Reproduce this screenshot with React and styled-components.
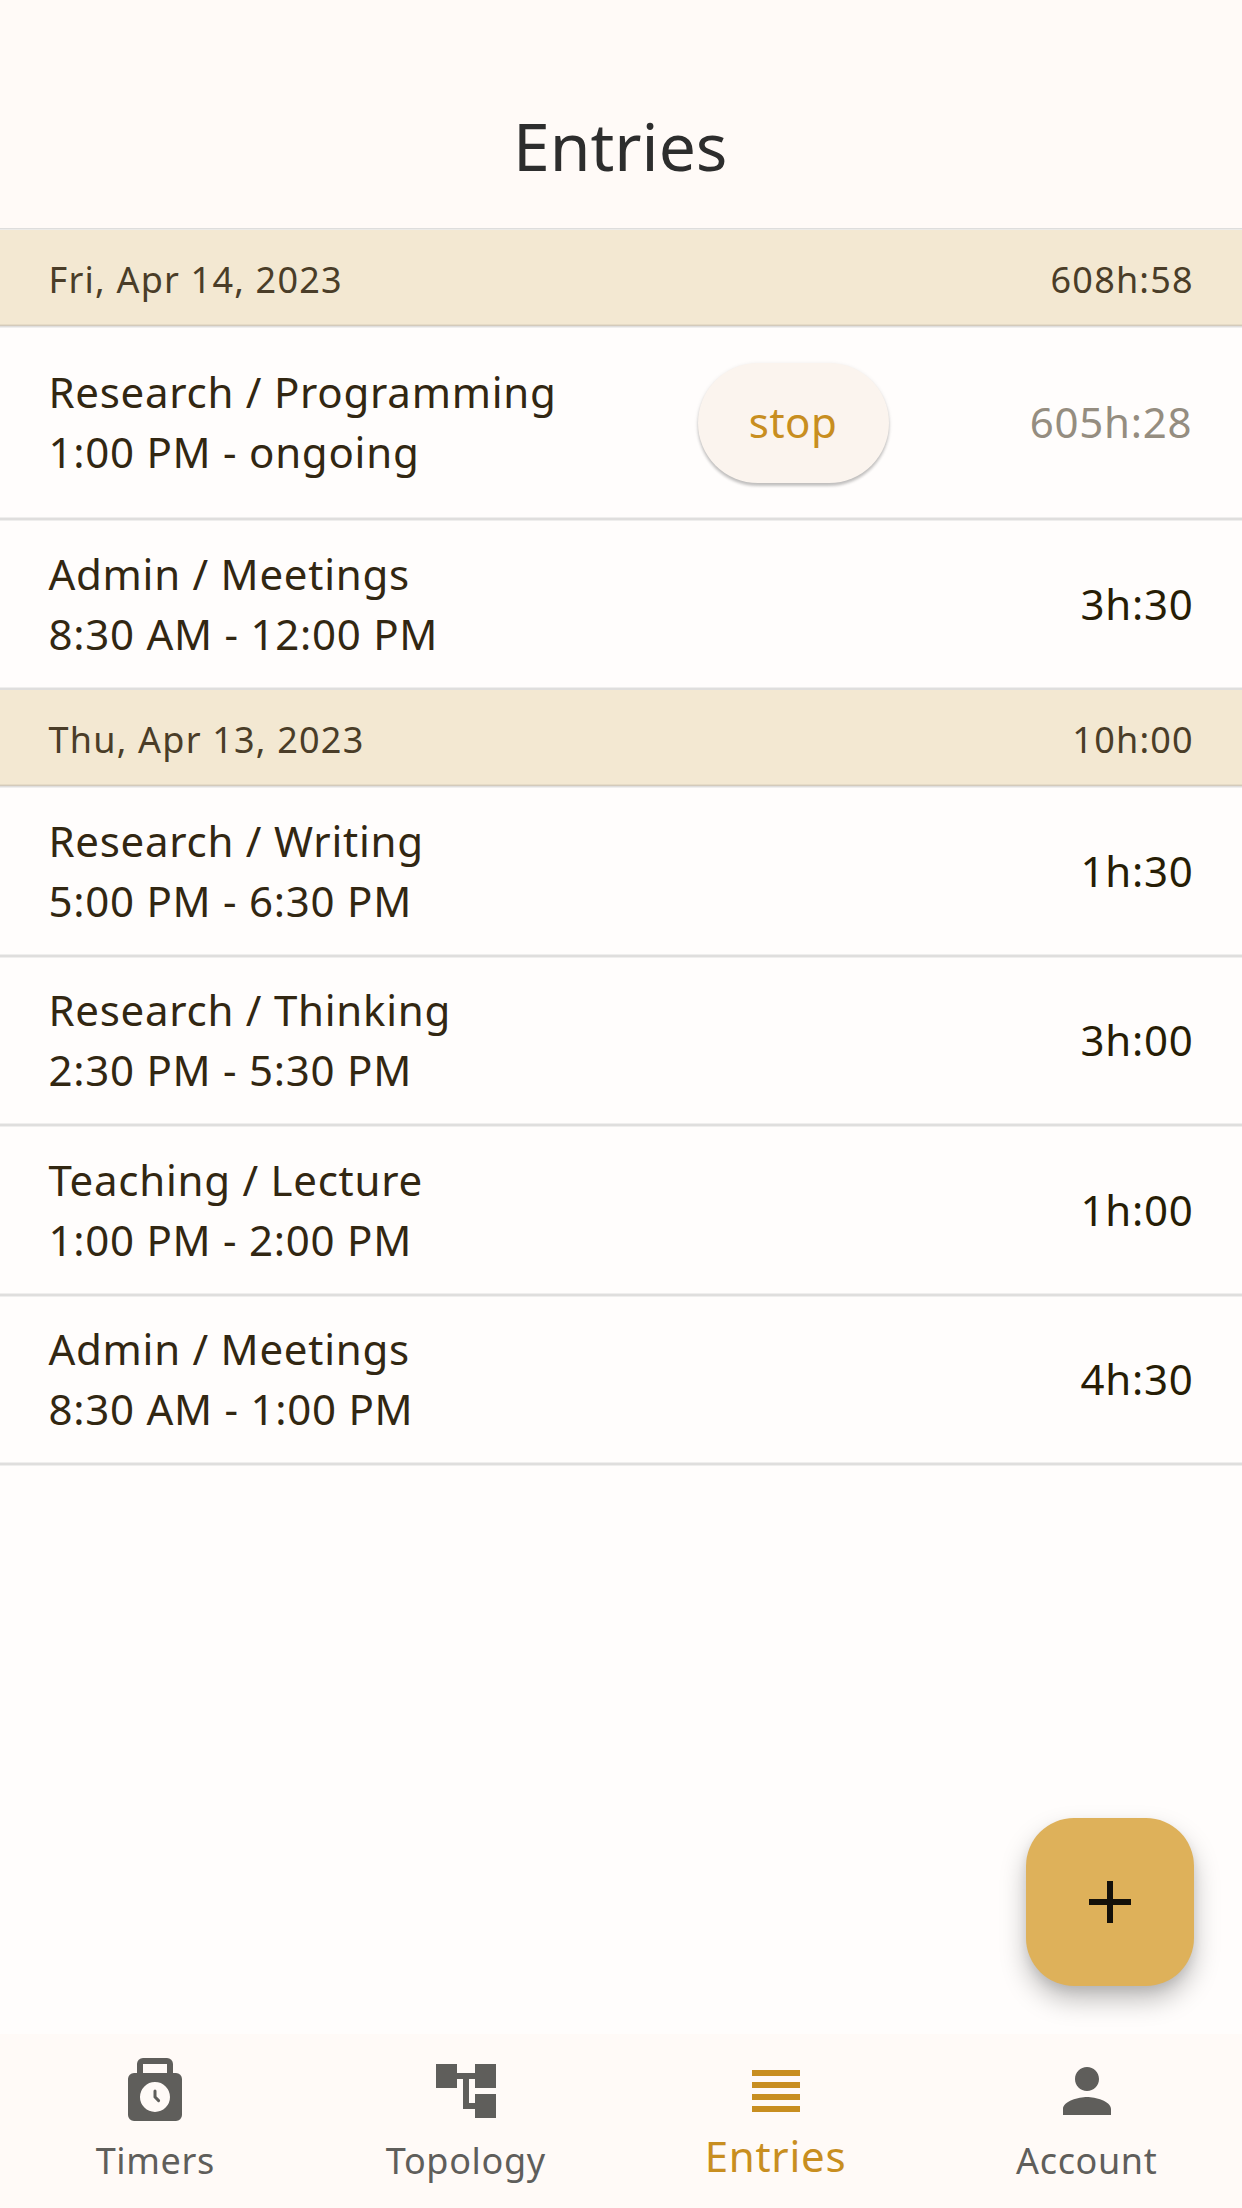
import React from "react";
import styled, { createGlobalStyle, css } from "styled-components";

const GlobalStyle = createGlobalStyle`
  *, *::before, *::after { box-sizing: border-box; }
  body {
    margin: 0;
    background: #fffdfc;
    font-family: "Noto Sans", "Open Sans", sans-serif;
  }
`;

const Screen = styled.div`
  position: relative;
  display: flex;
  flex-direction: column;
  width: 1242px;
  height: 2208px;
  overflow: hidden;
  background: #fffdfc;
  color: #322712;
`;

const AppBar = styled.header`
  display: flex;
  flex: none;
  align-items: center;
  justify-content: center;
  height: 228px;
  padding: 62px 1.5px 0 0;
  background: #fffaf7;
`;

const Title = styled.h1`
  margin: 0;
  font-size: 66px;
  font-weight: 400;
  line-height: 84px;
  color: #2d2d2d;
`;

const EntryList = styled.main`
  flex: 1;
  min-height: 0;
`;

const DayHeader = styled.div`
  display: flex;
  align-items: center;
  justify-content: space-between;
  height: ${(p) => p.$height}px;
  padding: 6px 48.2px 0 48.6px;
  background: #f3e8d2;
  font-size: 36px;
  line-height: 48px;
  letter-spacing: 1.2px;
  color: #4a3d28;
`;

const rules = {
  top: css`
    height: 2px;
    background: linear-gradient(#dedddc 50%, #ecebe9 50%);
  `,
  row: css`
    height: 4px;
    background: linear-gradient(#efeeed 25%, #dfdedd 25% 75%, #efeeed 75%);
  `,
  beforeDay: css`
    height: 3px;
    background: linear-gradient(#efeeed 33.3%, #dfdedd 33.3%);
  `,
  afterDay: css`
    height: 4px;
    background: linear-gradient(#e6dbc6 25%, #d3cabb 25% 50%, #dfdedd 50% 75%, #efeeed 75%);
  `,
};

const Rule = styled.div`
  ${(p) => rules[p.$kind]}
`;

const EntryRow = styled.div`
  display: flex;
  align-items: center;
  height: ${(p) => p.$height}px;
  padding: 0 48.4px ${(p) => p.$inset || 0}px 48.4px;
  font-size: 42px;
  line-height: 60px;
  letter-spacing: 0.75px;
`;

const EntryText = styled.div`
  flex: 1;
`;

const Line = styled.div`
  white-space: nowrap;
`;

const StopButton = styled.button`
  width: 191px;
  height: 120px;
  margin: 2px 1px 0 0;
  padding: 0 0 2px;
  border: 0;
  border-radius: 60px;
  background: #fbf4ee;
  box-shadow: 0 3px 3px rgba(0, 0, 0, 0.2), 0 1px 4px rgba(0, 0, 0, 0.1);
  font-family: inherit;
  font-size: 42px;
  font-weight: 400;
  line-height: 60px;
  letter-spacing: 0.5px;
  color: #c88e20;
`;

const Duration = styled.div`
  width: 304px;
  padding-right: ${(p) => (p.$running ? 1.4 : 0)}px;
  text-align: right;
  color: ${(p) => (p.$running ? "#958d80" : "#271d05")};
`;

const Fab = styled.button`
  position: absolute;
  right: 48px;
  bottom: 222px;
  display: flex;
  align-items: center;
  justify-content: center;
  width: 168px;
  height: 168px;
  padding: 0;
  border: 0;
  border-radius: 48px;
  background: #deb15a;
  box-shadow: 0 14px 26px rgba(0, 0, 0, 0.25), 0 5px 10px rgba(0, 0, 0, 0.08);
  color: #14110a;
`;

const Icon = styled.svg`
  display: block;
  width: 72px;
  height: 72px;
  fill: currentColor;
`;

const NavBar = styled.nav`
  display: grid;
  grid-template-columns: repeat(4, 1fr);
  flex: none;
  height: 174px;
  background: #fffaf7;
`;

const NavItem = styled.a`
  display: flex;
  flex-direction: column;
  align-items: center;
  padding-top: 21px;
  color: ${(p) => (p.$active ? "#c88e20" : "#5f5e5b")};
`;

const NavLabel = styled.span`
  margin-top: ${(p) => (p.$active ? -1 : 10)}px;
  margin-right: ${(p) => (p.$active ? 1.5 : 0)}px;
  font-size: ${(p) => (p.$active ? 42 : 36)}px;
  line-height: ${(p) => (p.$active ? 60 : 48)}px;
  letter-spacing: ${(p) => (p.$active ? 0.75 : 0.64)}px;
`;

const days = [
  {
    date: "Fri, Apr 14, 2023",
    total: "608h:58",
    height: 94,
    entries: [
      { name: "Research / Programming", time: "1:00 PM - ongoing", duration: "605h:28", running: true, height: 189, inset: 1 },
      { name: "Admin / Meetings", time: "8:30 AM - 12:00 PM", duration: "3h:30", height: 166 },
    ],
  },
  {
    date: "Thu, Apr 13, 2023",
    total: "10h:00",
    height: 94,
    entries: [
      { name: "Research / Writing", time: "5:00 PM - 6:30 PM", duration: "1h:30", height: 166 },
      { name: "Research / Thinking", time: "2:30 PM - 5:30 PM", duration: "3h:00", height: 165, inset: 1 },
      { name: "Teaching / Lecture", time: "1:00 PM - 2:00 PM", duration: "1h:00", height: 166 },
      { name: "Admin / Meetings", time: "8:30 AM - 1:00 PM", duration: "4h:30", height: 165, inset: 1 },
    ],
  },
];

const tabs = [
  {
    label: "Timers",
    icon: (
      <>
        <path
          fillRule="evenodd"
          d="M5 6h1V3a2 2 0 0 1 2-2h8a2 2 0 0 1 2 2v3h1a2 2 0 0 1 2 2v12a2 2 0 0 1-2 2H5a2 2 0 0 1-2-2V8a2 2 0 0 1 2-2zM8 3v3h8V3zM12 9a5 5 0 1 0 0 10 5 5 0 0 0 0-10z"
        />
        <path d="M12 12v2l1.2 1.2" fill="none" stroke="currentColor" strokeWidth="1" strokeLinecap="round" />
      </>
    ),
  },
  { label: "Topology", icon: <path d="M22 11V3h-7v3H9V3H2v8h7V8h2v10h4v3h7v-8h-7v3h-2V8h2v3z" /> },
  {
    label: "Entries",
    active: true,
    icon: <path d="M4 15h16v-2H4v2zm0 4h16v-2H4v2zm0-8h16V9H4v2zm0-6v2h16V5H4z" />,
  },
  {
    label: "Account",
    icon: (
      <path d="M12 12c2.21 0 4-1.79 4-4s-1.79-4-4-4-4 1.79-4 4 1.79 4 4 4zm0 2c-2.67 0-8 1.34-8 4v2h16v-2c0-2.66-5.33-4-8-4z" />
    ),
  },
];

function Day({ day, last }) {
  return (
    <section>
      <DayHeader $height={day.height}>
        <span>{day.date}</span>
        <span>{day.total}</span>
      </DayHeader>
      <Rule $kind="afterDay" />
      {day.entries.map((entry, i) => (
        <React.Fragment key={entry.time}>
          <EntryRow $height={entry.height} $inset={entry.inset}>
            <EntryText>
              <Line>{entry.name}</Line>
              <Line>{entry.time}</Line>
            </EntryText>
            {entry.running && <StopButton>stop</StopButton>}
            <Duration $running={entry.running}>{entry.duration}</Duration>
          </EntryRow>
          <Rule $kind={!last && i === day.entries.length - 1 ? "beforeDay" : "row"} />
        </React.Fragment>
      ))}
    </section>
  );
}

export default function App() {
  return (
    <Screen>
      <GlobalStyle />
      <AppBar>
        <Title>Entries</Title>
      </AppBar>
      <EntryList>
        <Rule $kind="top" />
        {days.map((day, i) => (
          <Day key={day.date} day={day} last={i === days.length - 1} />
        ))}
      </EntryList>
      <NavBar>
        {tabs.map((tab) => (
          <NavItem key={tab.label} $active={tab.active}>
            <Icon viewBox="0 0 24 24">{tab.icon}</Icon>
            <NavLabel $active={tab.active}>{tab.label}</NavLabel>
          </NavItem>
        ))}
      </NavBar>
      <Fab aria-label="Add entry">
        <Icon viewBox="0 0 24 24">
          <path d="M19 13h-6v6h-2v-6H5v-2h6V5h2v6h6v2z" />
        </Icon>
      </Fab>
    </Screen>
  );
}
